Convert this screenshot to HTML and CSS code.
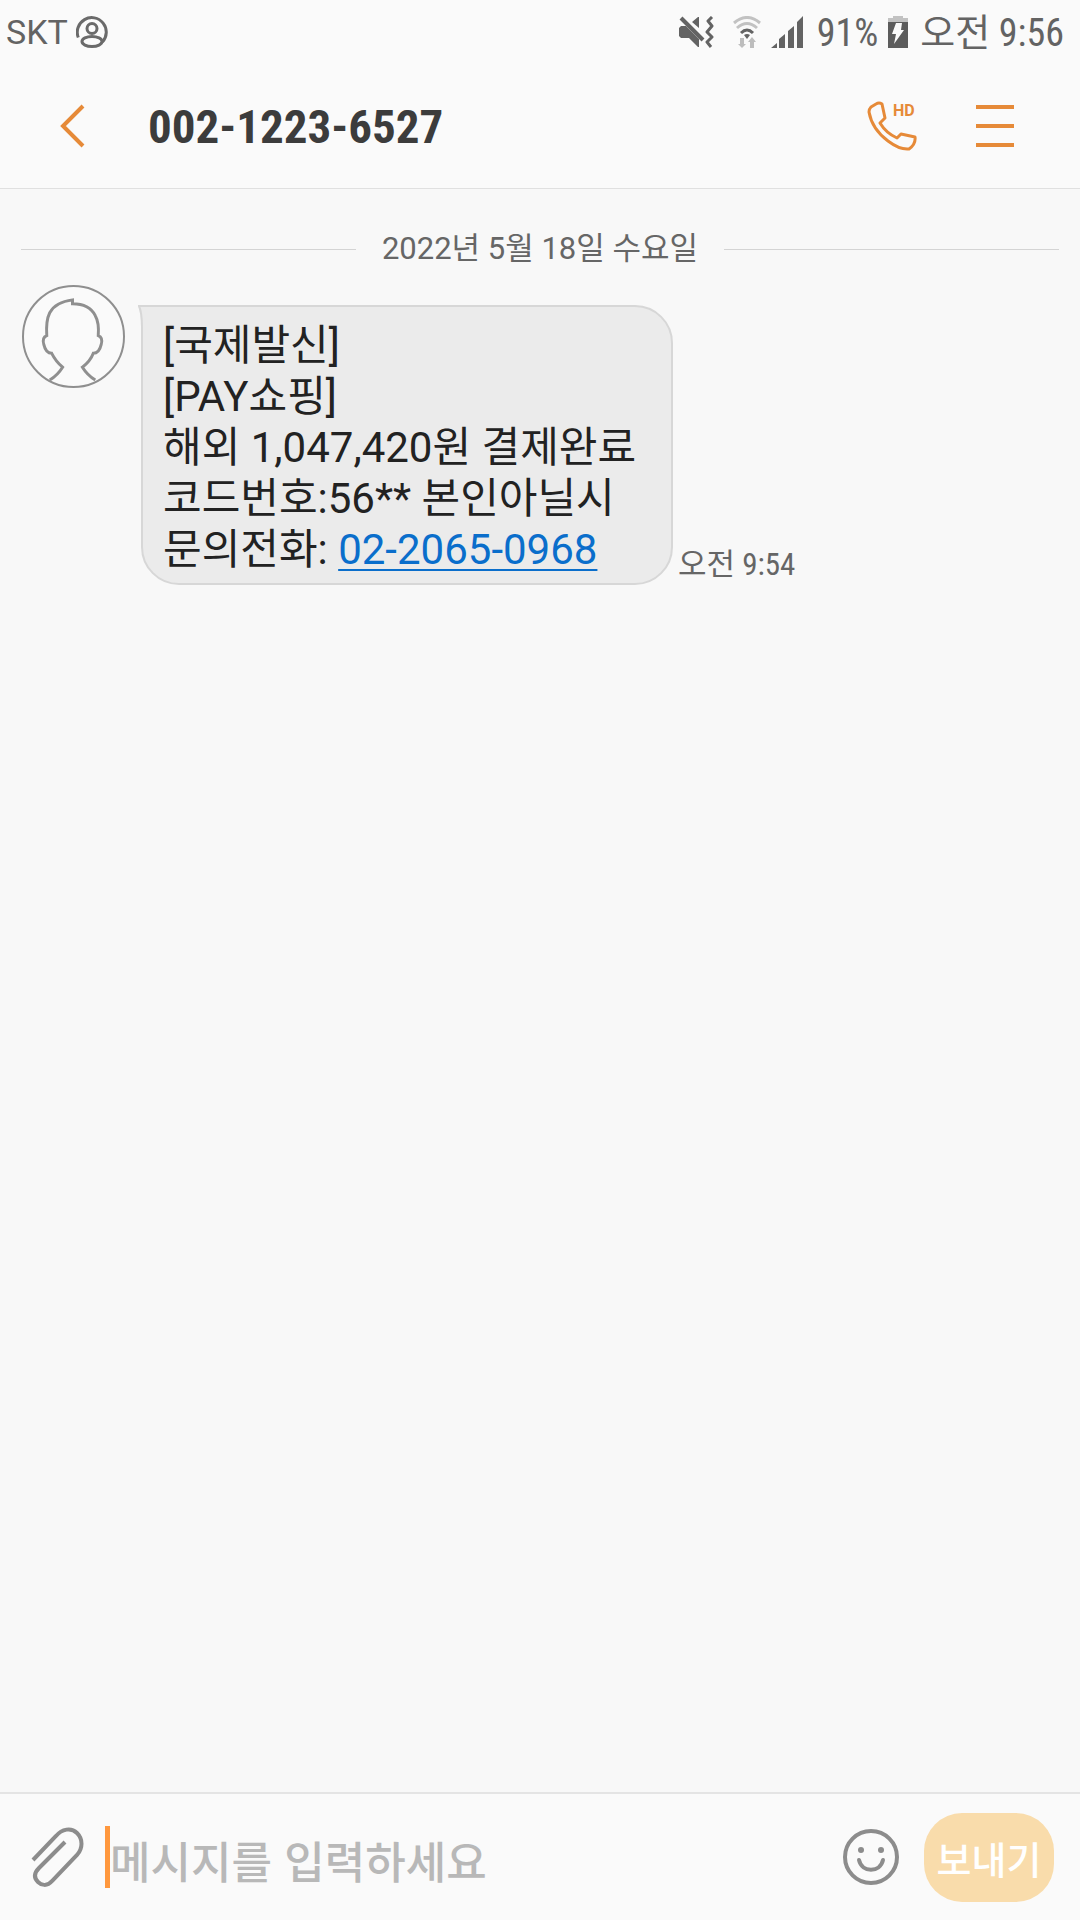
FILE: index.html
```
<!DOCTYPE html>
<html lang="ko">
<head>
    <meta charset="UTF-8">
    <meta name="viewport" content="width=device-width, initial-scale=1.0">
    <title>002-1223-6527</title>
    <link rel="stylesheet" href="styles.css">
</head>
<body>

    <!-- Status bar -->
    <div class="status-bar">
        <div class="status-left">
            <span class="carrier">SKT</span>
            <svg width="32" height="32" viewBox="0 0 32 32" fill="none" stroke="#6a6a6a" stroke-width="3">
                <path d="M2.3 21.5A14.5 14.5 0 1 1 26.4 26"/>
                <circle cx="16" cy="12.5" r="5"/>
                <ellipse cx="16" cy="25.5" rx="10" ry="5"/>
            </svg>
        </div>
        <div class="status-right">
            <svg class="icon-mute" width="35" height="32" viewBox="0 0 35 32">
                <path fill="#636363" d="M0 12l2-2h5l13 13v8h-1l-9-9H2l-2-2zM13 6l6-5h1v11z"/>
                <path fill="none" stroke="#636363" stroke-width="4" d="M2 2l22 22"/>
                <path fill="none" stroke="#636363" stroke-width="3" stroke-linejoin="round" d="M33 1l-4 4 4 5-5 6 5 5-5 5 4 5"/>
            </svg>
            <svg class="icon-wifi" width="28" height="32" viewBox="0 0 28 32">
                <g fill="none" stroke-width="3">
                    <path stroke="#c2c2c2" d="M1 7q13-11 26 0M4 12q10-9 20 0"/>
                    <path stroke="#636363" d="M8 17q6-6 12 0"/>
                </g>
                <path fill="#636363" d="M11 19q3-2 6 0l-3 4z"/>
                <path fill="#bdbdbd" d="M7 22h4v6h2l-4 4-4-4h2zM17 32h4v-6h2l-4-5-4 5h2z"/>
            </svg>
            <svg class="icon-signal" width="32" height="32" viewBox="0 0 32 32" fill="#636363">
                <path d="M0 32l6-5v5zM8 23l6-5v14H8zM17 15l6-5v22h-6zM26 6l6-6v32h-6z"/>
            </svg>
            <span class="battery-level">91%</span>
            <svg width="20" height="32" viewBox="0 0 20 32">
                <path fill="#c2c2c2" d="M5 0h10v2h5v4H0V2h5z"/>
                <path fill="#5c5c5c" d="M0 6h20v26H0z"/>
                <path fill="#fafafa" d="M8 7h6l-1 7h3L6 28l2-10H4z"/>
            </svg>
            <span class="clock">오전 9:56</span>
        </div>
    </div>

    <!-- Conversation header -->
    <header class="header">
        <button type="button" class="icon-btn back" aria-label="뒤로">
            <svg width="26" height="44" viewBox="0 0 26 44" fill="none" stroke="#e68a38" stroke-width="4">
                <path d="M24 2L4 22l20 20"/>
            </svg>
        </button>
        <h1>002-1223-6527</h1>
        <button type="button" class="icon-btn call" aria-label="HD 통화">
            <svg width="50" height="50" viewBox="0 0 50 50">
                <path fill="none" stroke="#e68a38" stroke-width="3" stroke-linejoin="round" d="M9 3Q12 1 15 3L18 17 13 22Q19 32 30 37L34 33 48 36Q49 43 42 48Q33 49 21 40Q5 28 2 11Q2 8 4 6Z"/>
                <text x="26" y="15" class="hd">HD</text>
            </svg>
        </button>
        <button type="button" class="icon-btn menu" aria-label="메뉴">
            <svg width="38" height="42" viewBox="0 0 38 42" fill="#e68a38">
                <path d="M0 0h38v4H0zM0 19h38v4H0zM0 38h38v4H0z"/>
            </svg>
        </button>
    </header>

    <!-- Messages -->
    <main class="messages">
        <div class="date-divider">2022년 5월 18일 수요일</div>
        <div class="message">
            <svg class="avatar" width="103" height="103" viewBox="0 0 104 104" fill="none" stroke="#8f8f8f">
                <circle cx="52" cy="52" r="51" stroke-width="2" fill="#fafafa"/>
                <path stroke-width="3" d="M28 96Q36 91 41 83Q34 77 30 69Q24 69 22 60Q20 53 25 51Q24 36 28 28Q34 17 51 15V19Q68 19 74 31Q78 38 77 51Q82 53 80 60Q78 69 72 69Q69 77 61 83Q66 91 74 96"/>
            </svg>
            <div class="bubble">
                <svg class="tail" width="12" height="40" viewBox="0 0 12 40">
                    <path fill="#ebebeb" d="M0 0h12v40H3V22Q3 8 0 0z"/>
                    <path fill="none" stroke="#d7d7d7" stroke-width="2" d="M12 1H1Q4 8 4 22v18"/>
                </svg>
                <p>[국제발신]<br>
                [PAY쇼핑]<br>
                해외 1,047,420원 결제완료<br>
                코드번호:56** 본인아닐시<br>
                문의전화: <a href="tel:02-2065-0968">02-2065-0968</a></p>
            </div>
            <span class="time">오전 9:54</span>
        </div>
    </main>

    <!-- Compose bar -->
    <form class="compose">
        <button type="button" class="icon-btn attach" aria-label="첨부">
            <svg width="54" height="60" viewBox="0 0 54 60" fill="none" stroke="#8c8c8c" stroke-width="4">
                <path d="M2 33L25 9C31 2 40 0 46 6C52 12 52 21 46 28L21 54C16 60 10 58 7 55C3 51 3 46 8 41L34 15"/>
            </svg>
        </button>
        <input type="text" class="message-input" placeholder="메시지를 입력하세요" aria-label="메시지">
        <button type="button" class="icon-btn emoji" aria-label="이모티콘">
            <svg width="56" height="56" viewBox="0 0 56 56" fill="none" stroke="#8c8c8c" stroke-width="4">
                <circle cx="28" cy="28" r="26"/>
                <path d="M16 31c3 13 21 13 24 0" stroke-linecap="round"/>
                <circle cx="18" cy="21" r="3" fill="#8c8c8c" stroke="none"/>
                <circle cx="38" cy="21" r="3" fill="#8c8c8c" stroke="none"/>
            </svg>
        </button>
        <button type="button" class="send">보내기</button>
    </form>

</body>
</html>
```
FILE: styles.css
```
:root {
    --accent: #e68a38;
    --bar: #fafafa;
    --background: #f8f8f8;
    --bubble: #ebebeb;
    --bubble-border: #d7d7d7;
    --text: #222;
    --muted: #666;
    --condensed: "Roboto Condensed", "Liberation Sans Narrow", "Noto Sans CJK KR", sans-serif;
}

* {
    margin: 0;
    padding: 0;
    box-sizing: border-box;
}

body {
    display: flex;
    flex-direction: column;
    min-height: 100vh;
    background: var(--background);
    color: var(--text);
    font-family: Roboto, "Noto Sans CJK KR", sans-serif;
}

svg {
    display: block;
    flex-shrink: 0;
}

button {
    border: none;
    background: none;
    cursor: pointer;
}

/* Status bar */
.status-bar {
    display: flex;
    justify-content: space-between;
    align-items: center;
    height: 64px;
    padding: 0 16px 0 6px;
    background: var(--bar);
    color: #636363;
}

.status-left,
.status-right {
    display: flex;
    align-items: center;
}

.status-left {
    gap: 8px;
}

.carrier {
    font-size: 34px;
}

.icon-mute {
    margin-right: 19px;
}

.icon-wifi {
    margin-right: 10px;
}

.icon-signal {
    margin-right: 14px;
}

.battery-level,
.clock {
    padding-top: 2px;
    font-family: var(--condensed);
    font-size: 38px;
    line-height: 48px;
}

.battery-level {
    margin-right: 10px;
}

.clock {
    margin-left: 12px;
}

/* Header */
.header {
    display: flex;
    align-items: center;
    height: 125px;
    padding: 0 66px 0 59px;
    background: var(--bar);
    border-bottom: 1px solid #e0e0e0;
}

h1 {
    flex: 1;
    margin-left: 63px;
    font-family: var(--condensed);
    font-size: 47px;
    color: #3c3c3c;
}

.call {
    margin-right: 59px;
}

.hd {
    font-family: Roboto, sans-serif;
    font-size: 16px;
    font-weight: 700;
    fill: var(--accent);
}

/* Messages */
.messages {
    flex: 1;
    padding: 36px 21px;
}

.date-divider {
    display: flex;
    align-items: center;
    gap: 26px;
    font-size: 31px;
    line-height: 48px;
    color: var(--muted);
}

.date-divider::before,
.date-divider::after {
    content: "";
    flex: 1;
    height: 1px;
    background: #d4d4d4;
}

.message {
    display: flex;
    align-items: flex-start;
    margin-top: 12px;
}

.avatar {
    margin-left: 1px;
}

.bubble {
    position: relative;
    margin: 20px 5px 0 16px;
    padding: 13px 35px 8px 20px;
    background: var(--bubble);
    border: 2px solid var(--bubble-border);
    border-radius: 0 38px 38px 38px;
    font-size: 42px;
    line-height: 51px;
}

.tail {
    position: absolute;
    top: -2px;
    left: -5px;
}

.bubble a {
    color: #0a6ecb;
    text-decoration-thickness: 2px;
    text-underline-offset: 5px;
}

.time {
    align-self: flex-end;
    font-family: var(--condensed);
    font-size: 31px;
    line-height: 40px;
    color: var(--muted);
}

/* Compose bar */
.compose {
    display: flex;
    align-items: center;
    height: 128px;
    padding: 0 26px 0 31px;
    background: var(--bar);
    border-top: 2px solid #e4e4e4;
}

.message-input {
    flex: 1;
    min-width: 0;
    height: 62px;
    margin-left: 20px;
    padding-top: 6px;
    border: none;
    border-left: 5px solid #ff983e;
    outline: none;
    background: none;
    font-family: "Noto Sans CJK KR", sans-serif;
    font-size: 44px;
    font-weight: 500;
    color: var(--text);
}

.message-input::placeholder {
    color: #b8b8b8;
    opacity: 1;
}

.send {
    width: 130px;
    height: 89px;
    margin-left: 25px;
    border-radius: 38px;
    background: #f9dcab;
    color: #fff;
    font-family: "Noto Sans CJK KR", sans-serif;
    font-size: 38px;
    font-weight: 500;
}
```
